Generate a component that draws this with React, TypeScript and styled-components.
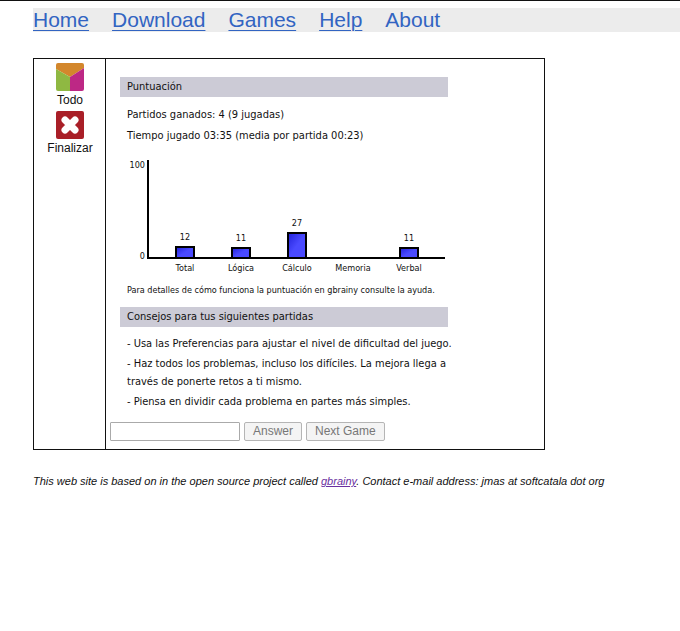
import React from "react";
import styled, { createGlobalStyle } from "styled-components";

const GlobalStyle = createGlobalStyle`
  *, *::before, *::after { box-sizing: border-box; }
  body {
    margin: 0;
    background: #fff;
    color: #111;
    font-family: "Liberation Sans", Arial, sans-serif;
  }
`;

const Page = styled.div`
  border-top: 1px solid #111;
  padding: 7px 0 24px 33px;
`;

const Nav = styled.nav`
  display: flex;
  flex-wrap: wrap;
  gap: 0 23px;
  background: #ececec;
  font-size: 21px;
  line-height: 24px;
`;

const NavLink = styled.a<{ $current?: boolean }>`
  color: #3264c2;
  text-decoration: ${(p) => (p.$current ? "none" : "underline")};
  text-decoration-thickness: 1px;
  text-underline-offset: 3px;
`;

const Game = styled.main`
  display: grid;
  grid-template-columns: 72px minmax(0, 1fr);
  max-width: 512px;
  margin-top: 26px;
  border: 1px solid #111;
`;

const Sidebar = styled.div`
  display: flex;
  flex-direction: column;
  align-items: center;
  gap: 3px;
  padding: 4px 0 0 1px;
  border-right: 1px solid #111;
`;

const ToolButton = styled.button`
  display: flex;
  flex-direction: column;
  align-items: center;
  gap: 1px;
  padding: 0;
  border: 0;
  background: none;
  color: #111;
  font: 12px/16px "Liberation Sans", Arial, sans-serif;
  cursor: pointer;
`;

const Board = styled.div`
  padding: 18px 4px 8px;
`;

const Report = styled.div`
  max-width: 360px;
  padding-left: 10px;
  color: #111;
  font-family: "DejaVu Sans Condensed", "DejaVu Sans", sans-serif;
  font-size: 11px;
`;

const Heading = styled.h2`
  max-width: 328px;
  margin: 0;
  padding-left: 7px;
  background: #cccbd6;
  font-size: 11px;
  font-weight: 400;
  line-height: 20px;
`;

const Stats = styled.div`
  padding: 7px 0 0 7px;
  line-height: 21px;
  p { margin: 0; }
`;

const Chart = styled.svg`
  display: block;
  margin-top: 10px;
  font-size: 9px;
  fill: #111;
`;

const Note = styled.p`
  margin: 0;
  padding: 8px 0 9px 7px;
  font-size: 9px;
  line-height: 16px;
  white-space: nowrap;
`;

const Tips = styled.ul`
  display: flex;
  flex-direction: column;
  gap: 2px;
  margin: 0;
  padding: 8px 0 0 7px;
  list-style: none;
  line-height: 18px;
`;

const AnswerForm = styled.form`
  display: flex;
  flex-wrap: wrap;
  gap: 4px;
  margin-top: 11px;
`;

const AnswerInput = styled.input`
  width: 130px;
  height: 19px;
  padding: 0 4px;
  border: 1px solid #aaa;
  border-radius: 1px;
  background: #fff;
  font: 12px "Liberation Sans", Arial, sans-serif;
`;

const FormButton = styled.button`
  height: 19px;
  padding: 0 8px;
  border: 1px solid #b5b5b5;
  border-radius: 2px;
  background: #f4f4f4;
  color: #777;
  font: 12px/17px "Liberation Sans", Arial, sans-serif;
`;

const Footer = styled.footer`
  margin-top: 23px;
  font-size: 11px;
  font-style: italic;
  line-height: 16px;
  a { color: #6a2fa0; }
`;

const AllIcon = () => (
  <svg width="28" height="28" viewBox="0 0 28 28" aria-hidden="true">
    <defs>
      <clipPath id="tile"><rect width="28" height="28" rx="2" /></clipPath>
    </defs>
    <g clipPath="url(#tile)">
      <path d="M0 0H28V5L14 14L0 6Z" fill="#d3872c" />
      <path d="M0 6L14 14V28H0Z" fill="#8fb842" />
      <path d="M28 5L14 14V28H28Z" fill="#bd2885" />
    </g>
  </svg>
);

const FinishIcon = () => (
  <svg width="28" height="28" viewBox="0 0 28 28" aria-hidden="true">
    <rect width="28" height="28" rx="2" fill="#a91f27" />
    <path d="M9 9L19 19M19 9L9 19" stroke="#fff" strokeWidth="7" strokeLinecap="round" />
  </svg>
);

const scores = [
  { label: "Total", value: 12 },
  { label: "Lógica", value: 11 },
  { label: "Cálculo", value: 27 },
  { label: "Memoria", value: 0 },
  { label: "Verbal", value: 11 },
];

const BASE = 101;

const ScoreChart = () => (
  <Chart width="328" height="118" viewBox="0 0 328 118" role="img" aria-label="Puntuación por categoría">
    <defs>
      <linearGradient id="bar" x1="0" y1="0" x2="1" y2="1">
        <stop offset="0" stopColor="#2020d8" />
        <stop offset="0.5" stopColor="#4a4aff" />
        <stop offset="1" stopColor="#4a4aff" />
      </linearGradient>
    </defs>
    <text x="25" y="12" textAnchor="end">100</text>
    <text x="25" y="103" textAnchor="end">0</text>
    {scores.map(({ label, value }, i) => {
      const center = 65 + i * 56;
      const height = Math.round(value * 0.92);
      return (
        <g key={label}>
          {value > 0 && (
            <>
              <rect x={center - 9} y={BASE + 1 - height} width="18" height={height} fill="url(#bar)" stroke="#000" strokeWidth="2" />
              <text x={center} y={BASE - height - 6} textAnchor="middle">{value}</text>
            </>
          )}
          <text x={center} y="115" textAnchor="middle">{label}</text>
        </g>
      );
    })}
    <path d="M28 4V102H325" fill="none" stroke="#000" strokeWidth="2" />
  </Chart>
);

const links = ["Home", "Download", "Games", "Help", "About"];

export default function App() {
  return (
    <>
      <GlobalStyle />
      <Page>
        <Nav>
          {links.map((name) => (
            <NavLink key={name} href={`#${name.toLowerCase()}`} $current={name === "About"}>{name}</NavLink>
          ))}
        </Nav>
        <Game>
          <Sidebar>
            <ToolButton type="button"><AllIcon />Todo</ToolButton>
            <ToolButton type="button"><FinishIcon />Finalizar</ToolButton>
          </Sidebar>
          <Board>
            <Report>
              <Heading>Puntuación</Heading>
              <Stats>
                <p>Partidos ganados: 4 (9 jugadas)</p>
                <p>Tiempo jugado 03:35 (media por partida 00:23)</p>
              </Stats>
              <ScoreChart />
              <Note>Para detalles de cómo funciona la puntuación en gbrainy consulte la ayuda.</Note>
              <Heading>Consejos para tus siguientes partidas</Heading>
              <Tips>
                <li>- Usa las Preferencias para ajustar el nivel de dificultad del juego.</li>
                <li>- Haz todos los problemas, incluso los difíciles. La mejora llega a<br />través de ponerte retos a ti mismo.</li>
                <li>- Piensa en dividir cada problema en partes más simples.</li>
              </Tips>
            </Report>
            <AnswerForm onSubmit={(e) => e.preventDefault()}>
              <AnswerInput type="text" aria-label="Answer" />
              <FormButton type="submit">Answer</FormButton>
              <FormButton type="button">Next Game</FormButton>
            </AnswerForm>
          </Board>
        </Game>
        <Footer>
          This web site is based on in the open source project called <a href="#gbrainy">gbrainy</a>. Contact e-mail address: jmas at softcatala dot org
        </Footer>
      </Page>
    </>
  );
}
